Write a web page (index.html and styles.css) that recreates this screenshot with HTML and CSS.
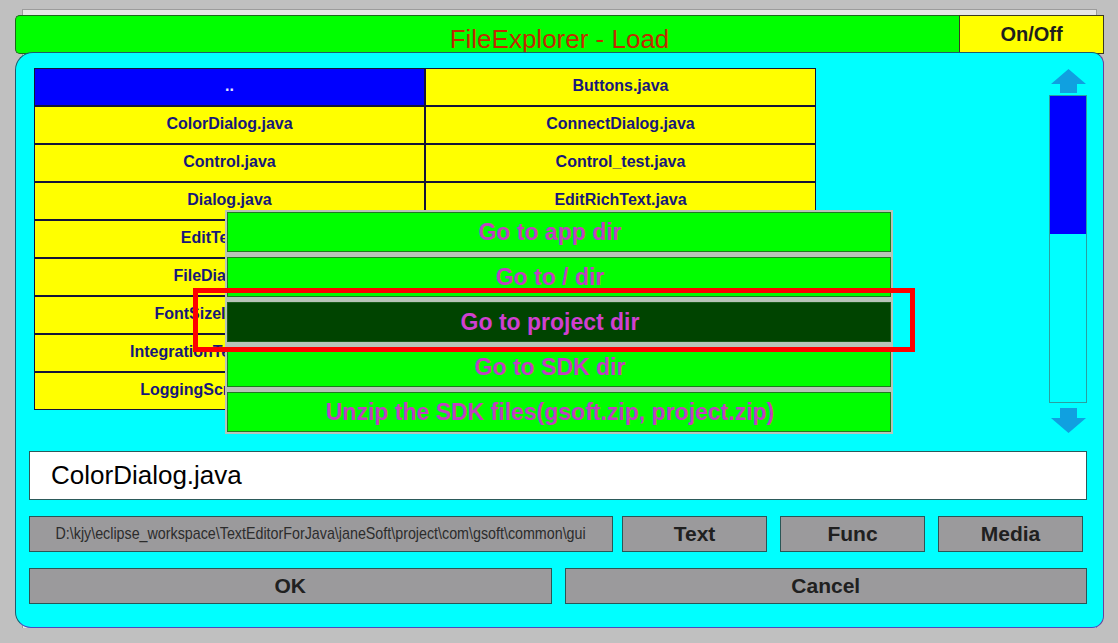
FILE: index.html
```html
<!DOCTYPE html>
<html>
<head>
<meta charset="utf-8">
<title>FileExplorer - Load</title>
<link rel="stylesheet" href="styles.css">
</head>
<body>
<div class="app">
  <div class="titlebar">
    <div class="tb-green"></div>
    <div class="tb-onoff">On/Off</div>
    <div class="tb-title">FileExplorer - Load</div>
  </div>
  <div class="panel">
    <div class="top">
      <div class="files">
        <div class="cell sel">..</div>
        <div class="cell">Buttons.java</div>
        <div class="cell">ColorDialog.java</div>
        <div class="cell">ConnectDialog.java</div>
        <div class="cell">Control.java</div>
        <div class="cell">Control_test.java</div>
        <div class="cell">Dialog.java</div>
        <div class="cell">EditRichText.java</div>
        <div class="cell">EditText.java</div>
        <div class="cell">EditTextView.java</div>
        <div class="cell">FileDialog.java</div>
        <div class="cell">FontList.java</div>
        <div class="cell">FontSizeInputs.java</div>
        <div class="cell">HighArray.java</div>
        <div class="cell">IntegrationTestDialog.java</div>
        <div class="cell">Keyboard.java</div>
        <div class="cell">LoggingScrollView.java</div>
        <div class="cell">MenuWithScrollBar.java</div>
      </div>
      <div class="scroll">
        <svg class="up" viewBox="0 0 35 24"><polygon points="17.5,0 35,15 26,15 26,24 9,24 9,15 0,15"/></svg>
        <div class="track"><div class="thumb"></div></div>
        <svg class="down" viewBox="0 0 35 25"><polygon points="9,0 26,0 26,10 35,10 17.5,25 0,10 9,10"/></svg>
      </div>
    </div>
    <div class="namefield">ColorDialog.java</div>
    <div class="row3">
      <div class="path"><span class="path-text">D:\kjy\eclipse_workspace\TextEditorForJava\janeSoft\project\com\gsoft\common\gui</span></div>
      <div class="btn">Text</div>
      <div class="btn">Func</div>
      <div class="btn">Media</div>
    </div>
    <div class="row4">
      <div class="btn">OK</div>
      <div class="btn">Cancel</div>
    </div>
    <div class="menu">
      <div class="mi">Go to app dir</div>
      <div class="mi">Go to / dir</div>
      <div class="mi sel">Go to project dir</div>
      <div class="mi">Go to SDK dir</div>
      <div class="mi">Unzip the SDK files(gsoft.zip, project.zip)</div>
    </div>
    <div class="focus"></div>
  </div>
</div>
</body>
</html>
```

FILE: styles.css
```css
html, body {
  margin: 0;
  padding: 0;
}
body {
  background: #c0c0c0;
  font-family: "Liberation Sans", Arial, sans-serif;
}
.app {
  position: relative;
  z-index: 0;
  width: 1089px;
  padding: 15px 0 0 15px;
}
.app::before {
  content: "";
  position: absolute;
  z-index: -1;
  left: 22px;
  top: 9px;
  width: 1073px;
  height: 619px;
  background: #e6e6e6;
  border-top: 1px solid #9c9c9c;
  border-left: 1px solid #9c9c9c;
  border-right: 1px solid #9c9c9c;
}
.titlebar {
  display: grid;
  grid-template-columns: 1fr 145px;
  height: 37px;
}
.tb-green {
  grid-area: 1 / 1;
  background: #00ff00;
  border: 1px solid #1c6a1c;
  border-right: none;
  border-radius: 5px 0 0 5px;
}
.tb-onoff {
  grid-area: 1 / 2;
  background: #ffff00;
  border: 1px solid #3a3a20;
  display: flex;
  align-items: center;
  justify-content: center;
  font-weight: bold;
  font-size: 20px;
  color: #1e1e1e;
}
.tb-title {
  grid-area: 1 / 1 / 2 / 3;
  justify-self: center;
  align-self: start;
  margin-top: 9px;
  font-size: 26px;
  line-height: 30px;
  color: #c22a00;
}
.panel {
  position: relative;
  background: #00ffff;
  border: 1px solid #1c5c6c;
  border-right-color: #6a3f9a;
  border-bottom-color: #4a4ac0;
  border-radius: 18px 12px 12px 16px;
  padding: 15px 16px 23px 13px;
}
.top {
  display: flex;
  justify-content: space-between;
  height: 366px;
}
.files {
  margin-left: 5px;
  width: 782px;
  height: 342px;
  box-sizing: border-box;
  display: grid;
  grid-template-columns: 389px 389px;
  grid-auto-rows: 36px;
  gap: 2px;
  padding: 1px;
  background: #141438;
}
.cell {
  background: #ffff00;
  display: flex;
  align-items: center;
  justify-content: center;
  padding-bottom: 2px;
  box-sizing: border-box;
  font-weight: bold;
  font-size: 16px;
  color: #17177a;
  white-space: nowrap;
  overflow: hidden;
}
.cell.sel {
  background: #0000ff;
  color: #e8e8ff;
}
.scroll {
  width: 38px;
  display: flex;
  flex-direction: column;
  align-items: center;
}
.scroll svg {
  fill: #10a0e0;
  display: block;
}
.up {
  margin-top: 1px;
  width: 35px;
  height: 24px;
}
.track {
  margin-top: 2px;
  width: 38px;
  height: 308px;
  box-sizing: border-box;
  border: 1px solid #2aa0a0;
}
.thumb {
  height: 138px;
  background: #0000ff;
}
.down {
  margin-top: 5px;
  width: 35px;
  height: 25px;
}
.namefield {
  margin-top: 17px;
  height: 49px;
  box-sizing: border-box;
  background: #ffffff;
  border: 1px solid #2c5a5a;
  padding-left: 21px;
  font-size: 26px;
  display: flex;
  align-items: center;
  color: #000000;
}
.row3 {
  margin-top: 16px;
  display: flex;
  height: 36px;
}
.path {
  width: 584px;
  flex: none;
  margin-right: 9px;
  box-sizing: border-box;
  border: 1px solid #2a5656;
  background: #9b9a9c;
  display: flex;
  align-items: center;
  justify-content: center;
  overflow: hidden;
}
.path-text {
  display: inline-block;
  flex: none;
  font-size: 17px;
  color: #2c2c2c;
  white-space: nowrap;
  transform: scaleX(0.84);
  transform-origin: center;
}
.btn {
  width: 145px;
  box-sizing: border-box;
  border: 1px solid #2a5656;
  background: #9b9a9c;
  display: flex;
  align-items: center;
  justify-content: center;
  font-weight: bold;
  font-size: 21px;
  color: #202020;
}
.row3 .btn + .btn {
  margin-left: 13px;
}
.row4 {
  margin-top: 16px;
  display: flex;
  gap: 13px;
  height: 36px;
}
.row4 .btn {
  flex: 1;
}
.menu {
  position: absolute;
  left: 209px;
  top: 157px;
  width: 668px;
  height: 224px;
  box-sizing: border-box;
  padding: 2px;
  background: #b8c4b8;
  display: flex;
  flex-direction: column;
  gap: 5px;
}
.mi {
  height: 40px;
  flex: none;
  box-sizing: border-box;
  background: #00ff00;
  border: 1px solid #1f7a1f;
  display: flex;
  align-items: center;
  justify-content: center;
  padding-right: 18px;
  font-weight: bold;
  font-size: 23px;
  color: #c040c0;
  white-space: nowrap;
}
.mi.sel {
  background: #004400;
  border-color: #1a5a1a;
  color: #d040d0;
}
.focus {
  position: absolute;
  left: 177px;
  top: 235px;
  width: 722px;
  height: 64px;
  box-sizing: border-box;
  border: 5px solid #ff0000;
}
```
